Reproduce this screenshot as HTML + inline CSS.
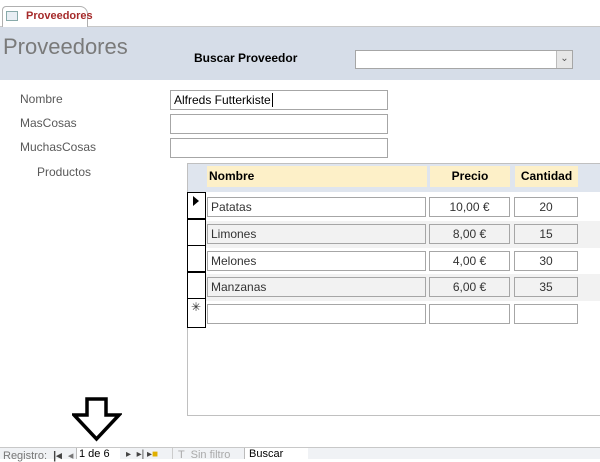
<!DOCTYPE html>
<html><head><meta charset="utf-8"><style>
*{margin:0;padding:0;box-sizing:border-box}
body{width:600px;height:459px;background:#fff;position:relative;overflow:hidden;font-family:"Liberation Sans",sans-serif;font-size:12px;color:#000}
.a{position:absolute}
.lbl{color:#595959;font-size:12px}
.box{position:absolute;border:1px solid #a6a6a6;background:#fff;height:20px;font-size:12px;line-height:18px;padding-left:3px;color:#333}
.g{background:#f2f2f2}
.r{text-align:center;padding-left:0}
.c{text-align:center;padding-left:0}
.hd{position:absolute;background:#fdf0c8;font-weight:bold;font-size:12px;line-height:21px;height:21px;top:166px}
.sel{position:absolute;left:187px;width:19px;border:1px solid #000;border-top:none}
</style></head><body>
<div class="a" style="left:0;top:26px;width:600px;height:1px;background:#c8c8c8"></div>
<div class="a" style="left:2px;top:6px;width:86px;height:21px;border:1px solid #b0b0b0;border-bottom:none;border-radius:4px 8px 0 0;background:#fff"></div>
<div class="a" style="left:6px;top:11px;width:12px;height:10px;border:1px solid #8aa;background:#e8eef4"></div>
<div class="a" style="left:26px;top:10px;color:#a52a2a;font-weight:bold;font-size:11px">Proveedores</div>
<div class="a" style="left:0;top:27px;width:600px;height:53px;background:#d6dde8"></div>
<div class="a" style="left:3px;top:34px;font-size:22px;color:#7a7a7a">Proveedores</div>
<div class="a" style="left:194px;top:51px;font-weight:bold;font-size:12px">Buscar Proveedor</div>
<div class="a" style="left:355px;top:50px;width:218px;height:19px;border:1px solid #a6a6a6;background:#fff"></div>
<div class="a" style="left:556px;top:51px;width:16px;height:17px;background:#e6e6e6;border-left:1px solid #bbb;text-align:center;font-size:10px;line-height:16px;color:#555">&#8964;</div>
<div class="a lbl" style="left:20px;top:92px">Nombre</div>
<div class="a lbl" style="left:20px;top:116px">MasCosas</div>
<div class="a lbl" style="left:20px;top:140px">MuchasCosas</div>
<div class="a lbl" style="left:37px;top:165px">Productos</div>
<div class="box" style="left:170px;top:90px;width:218px;color:#000">Alfreds Futterkiste<span style="border-left:1px solid #000;margin-left:1px"></span></div>
<div class="box" style="left:170px;top:114px;width:218px"></div>
<div class="box" style="left:170px;top:138px;width:218px"></div>
<div class="a" style="left:187px;top:163px;width:420px;height:253px;border:1px solid #c0c0c0;background:#fff"></div>
<div class="a" style="left:188px;top:164px;width:412px;height:28px;background:#dfe5ee"></div>
<div class="a g" style="left:206px;top:221px;width:394px;height:27px"></div>
<div class="a g" style="left:206px;top:274px;width:394px;height:27px"></div>
<div class="hd" style="left:207px;width:220px;padding-left:2px">Nombre</div>
<div class="hd" style="left:430px;width:80px;text-align:center">Precio</div>
<div class="hd" style="left:515px;width:63px;text-align:center">Cantidad</div>
<div class="sel" style="top:192px;height:27px;border-top:1px solid #000"></div>
<div class="a" style="left:193px;top:196px;width:0;height:0;border-top:5px solid transparent;border-bottom:5px solid transparent;border-left:6px solid #000"></div>
<div class="sel" style="top:219px;height:27px;border-top:1px solid #000"></div>
<div class="sel" style="top:245px;height:27px;border-top:1px solid #000"></div>
<div class="sel" style="top:272px;height:27px;border-top:1px solid #000"></div>
<div class="sel" style="top:298px;height:30px;border-top:1px solid #000"></div>
<div class="a" style="left:191px;top:300px;font-size:12px;color:#333">&#10035;</div>
<div class="box" style="left:207px;top:197px;width:219px">Patatas</div>
<div class="box r" style="left:429px;top:197px;width:81px">10,00 €</div>
<div class="box c" style="left:514px;top:197px;width:64px">20</div>
<div class="box g" style="left:207px;top:224px;width:219px">Limones</div>
<div class="box g r" style="left:429px;top:224px;width:81px">8,00 €</div>
<div class="box g c" style="left:514px;top:224px;width:64px">15</div>
<div class="box" style="left:207px;top:251px;width:219px">Melones</div>
<div class="box r" style="left:429px;top:251px;width:81px">4,00 €</div>
<div class="box c" style="left:514px;top:251px;width:64px">30</div>
<div class="box g" style="left:207px;top:277px;width:219px">Manzanas</div>
<div class="box g r" style="left:429px;top:277px;width:81px">6,00 €</div>
<div class="box g c" style="left:514px;top:277px;width:64px">35</div>
<div class="box" style="left:207px;top:304px;width:219px"></div>
<div class="box" style="left:429px;top:304px;width:81px"></div>
<div class="box" style="left:514px;top:304px;width:64px"></div>
<svg class="a" style="left:72px;top:397px" width="50" height="46"><path d="M15 2 H34 V18 H47 L24.5 42 L2 18 H15 Z" fill="#fff" stroke="#000" stroke-width="3.5" stroke-linejoin="miter"/></svg>
<div class="a" style="left:0;top:447px;width:600px;height:12px;background:#f0f2f5;border-top:1px solid #c8c8c8"></div>
<div class="a" style="left:3px;top:449px;font-size:11px;color:#777;white-space:nowrap">Registro: &nbsp;<b style="color:#444">|◂</b> &nbsp;◂</div>
<div class="a" style="left:76px;top:448px;width:44px;height:11px;background:#fff;border-left:1px solid #bbb;font-size:11px;line-height:12px;padding-left:2px">1 de 6</div>
<div class="a" style="left:126px;top:449px;font-size:10px;color:#444;white-space:nowrap">▸ &nbsp;▸| ▸<span style="color:#e0b000">■</span></div>
<div class="a" style="left:172px;top:448px;width:1px;height:11px;background:#ccc"></div>
<div class="a" style="left:178px;top:449px;font-size:11px;color:#aaa;white-space:nowrap">T &nbsp;Sin filtro</div>
<div class="a" style="left:244px;top:448px;width:64px;height:11px;background:#fff;border-left:1px solid #bbb;font-size:11px;line-height:12px;padding-left:4px">Buscar</div>
</body></html>
